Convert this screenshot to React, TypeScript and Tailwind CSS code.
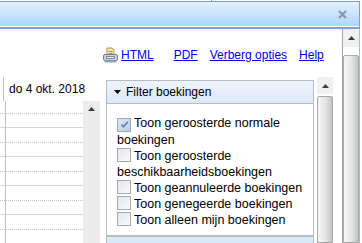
import React from "react";

const filters = [
  { label: "Toon geroosterde normale boekingen", checked: true },
  { label: "Toon geroosterde beschikbaarheidsboekingen", checked: false },
  { label: "Toon geannuleerde boekingen", checked: false },
  { label: "Toon genegeerde boekingen", checked: false },
  { label: "Toon alleen mijn boekingen", checked: false },
];

function PrintIcon() {
  return (
    <svg width="15" height="16" viewBox="0 0 15 16" className="shrink-0">
      <path d="M4 1h5l2 2v6H4z" fill="#f6e7b8" stroke="#b39248" strokeWidth="1" />
      <path d="M5.5 4.5h4M5.5 6.5h4" stroke="#b39248" strokeWidth="1" />
      <rect x="0.5" y="7.5" width="14" height="6" rx="1.5" fill="#c9d3df" stroke="#6f8094" />
      <rect x="3.5" y="9.5" width="8" height="2" fill="#eef2f6" stroke="#7d8ea2" />
      <rect x="1.5" y="13.5" width="12" height="2" fill="#9aa8b8" />
    </svg>
  );
}

function Checkbox({ checked }: { checked: boolean }) {
  return (
    <span
      className={`inline-flex w-[14px] h-[14px] mr-[3px] align-[-2px] items-center justify-center border border-[#a5a9b0] ${
        checked ? "bg-gradient-to-br from-[#dbe8f8] to-[#b8cde8]" : "bg-gradient-to-br from-[#e4e6ea] to-[#fafafa]"
      }`}
    >
      {checked && (
        <svg width="9" height="9" viewBox="0 0 9 9">
          <path d="M1.5 4.5l2 2.2L7.8 1.8" fill="none" stroke="#5b7fb0" strokeWidth="1.6" />
        </svg>
      )}
    </span>
  );
}

function ScrollThumb({ className }: { className: string }) {
  return (
    <div
      className={`border border-[#a9a9a9] rounded-t-[2px] bg-gradient-to-r from-[#f6f6f6] via-[#e6e6e6] to-[#c4c4c4] ${className}`}
    />
  );
}

export default function App() {
  return (
    <div className="w-[362px] h-[243px] overflow-hidden bg-white flex flex-col font-['Liberation_Sans',Arial,sans-serif] text-[12px] text-black">
      <div className="h-[1px] shrink-0 pl-[211px]">
        <div className="w-[1px] h-[1px] bg-[#8a9ab0]" />
      </div>
      <div className="h-[28px] shrink-0 w-[360px] border-t border-r border-[#7f9fc4] flex flex-col">
        <div className="h-[25px] bg-gradient-to-b from-[#e2f1ff] to-[#afd5fb] flex items-center justify-end pr-[12px]">
          <svg width="9" height="9" viewBox="0 0 9 9">
            <path d="M1 1l7 7M8 1l-7 7" stroke="#8797ac" strokeWidth="2.2" />
          </svg>
        </div>
        <div className="h-[1px] bg-white" />
        <div className="h-[2px] bg-[#7da3c8]" />
      </div>

      <div className="flex flex-1 min-h-0">
        <div className="w-[343px] flex flex-col border-r border-[#a8a8a8]">
          <div className="h-[48px] shrink-0 flex items-start pt-[18px] pl-[103px] gap-[3px]">
            <PrintIcon />
            <div className="flex gap-[21px] text-[#0000ee] underline leading-[14px] pt-[1px]">
              <span>HTML</span>
              <span className="-ml-[1px]">PDF</span>
              <span className="-ml-[9px]">Verberg opties</span>
              <span className="-ml-[9px]">Help</span>
            </div>
          </div>

          <div className="flex flex-1 min-h-0">
            <div className="w-[100px] shrink-0 flex flex-col">
              <div className="h-[24px] shrink-0 ml-[3px] border-l border-[#c4c4c4] pl-[5px] flex items-center">
                do 4 okt. 2018
              </div>
              <div className="flex flex-1 min-h-0">
                <div className="w-[83px] relative flex flex-col">
                  <div className="absolute left-[5px] top-0 bottom-0 w-[1px] bg-[#c0c0c0]" />
                  <div className="h-[13px] shrink-0 border-b border-dotted border-[#c6c6c6]" />
                  {[0, 1, 2, 3, 4].map((i) => (
                    <React.Fragment key={i}>
                      <div className="h-[14px] shrink-0 border-b border-[#d6d6d6]" />
                      <div className="h-[15px] shrink-0 border-b border-dotted border-[#c6c6c6]" />
                    </React.Fragment>
                  ))}
                </div>
                <div className="w-[17px] bg-[#ececec] flex justify-center pt-[6px]">
                  <svg width="7" height="4" viewBox="0 0 7 4">
                    <path d="M3.5 0L7 4H0z" fill="#3c3c3c" />
                  </svg>
                </div>
              </div>
            </div>

            <div className="w-[208px] shrink-0 ml-[6px] mt-[3px] flex flex-col border-x border-[#b8bcc4]">
              <div className="h-[24px] shrink-0 border-t border-b border-[#b8bcc4] bg-gradient-to-b from-[#eef4fc] to-[#dce9f8] flex items-center pl-[7px] gap-[5px]">
                <svg width="7" height="4" viewBox="0 0 7 4">
                  <path d="M0 0h7L3.5 4z" fill="#000" />
                </svg>
                <span>Filter boekingen</span>
              </div>
              <div className="h-[133px] shrink-0 pl-[10px] pr-[4px] pt-[11px] text-[12.5px] leading-[16px] border-b-2 border-[#b8bcc4]">
                {filters.map((f) => (
                  <div key={f.label}>
                    <Checkbox checked={f.checked} />
                    {f.label}
                  </div>
                ))}
              </div>
              <div className="flex-1 bg-[#dce9f8]" />
            </div>

            <div className="w-[16px] shrink-0 ml-[3px] flex flex-col">
              <div className="h-[17px] shrink-0 bg-[#f0f0f0] flex justify-center items-center">
                <svg width="7" height="4" viewBox="0 0 7 4">
                  <path d="M3.5 0L7 4H0z" fill="#3c3c3c" />
                </svg>
              </div>
              <ScrollThumb className="flex-1 mt-[2px]" />
            </div>
          </div>
        </div>

        <div className="w-[16px] shrink-0 flex flex-col">
          <div className="h-[18px] shrink-0 bg-[#f0f0f0] flex justify-center items-center">
            <svg width="7" height="4" viewBox="0 0 7 4">
              <path d="M3.5 0L7 4H0z" fill="#3c3c3c" />
            </svg>
          </div>
          <ScrollThumb className="flex-1 mt-[8px]" />
        </div>
        <div className="w-[1px] bg-[#a9bdd2]" />
      </div>
    </div>
  );
}
